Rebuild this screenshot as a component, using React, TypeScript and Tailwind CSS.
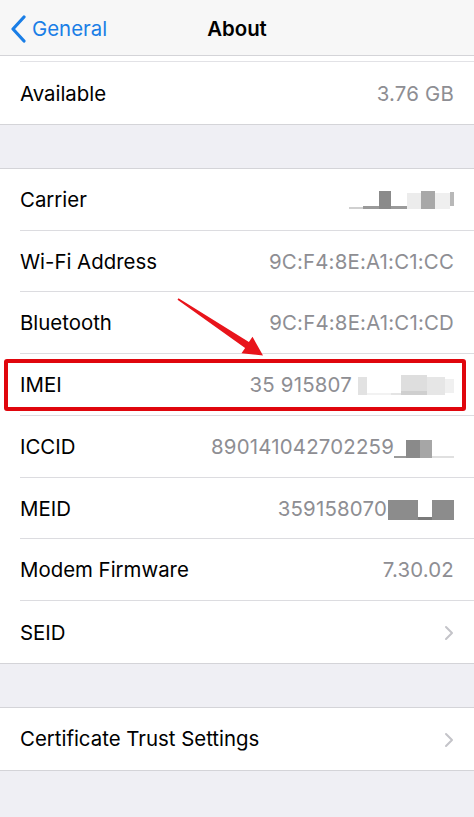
import React from "react";

const font = { fontFamily: "Inter, 'Noto Sans', sans-serif" };

function Chevron() {
  return (
    <svg width="10" height="16" viewBox="0 0 10 16" className="shrink-0">
      <path d="M2 2 L8 8 L2 14" fill="none" stroke="#c4c4c9" strokeWidth="2" strokeLinecap="round" strokeLinejoin="round" />
    </svg>
  );
}

function Row({ label, children, last }: { label: string; children?: React.ReactNode; last?: boolean }) {
  return (
    <div className="relative flex h-[61.75px] items-center bg-white pl-5">
      <div className={`flex h-full flex-1 items-center justify-between pr-5 pt-[2px] ${last ? "" : "border-b border-[#dcdce0]"}`}>
        <span className="text-[20.4px] text-black">{label}</span>
        {children}
      </div>
    </div>
  );
}

function Val({ children }: { children: React.ReactNode }) {
  return <span className="text-[20.4px] tracking-[0.2px] text-[#8e8e93]">{children}</span>;
}

export default function App() {
  return (
    <div className="relative h-[817px] w-[474px] overflow-hidden bg-[#efeff4]" style={font}>
      {/* Nav bar */}
      <div className="relative flex h-[56px] items-center border-b border-[#d4d4d8] bg-[#f7f7f7] pt-[3px]">
        <div className="flex items-center pl-[10px]">
          <svg width="18" height="28" viewBox="0 0 18 28">
            <path d="M14 2 L3 14 L14 26" fill="none" stroke="#1a7ee6" strokeWidth="3.2" strokeLinecap="round" strokeLinejoin="round" />
          </svg>
          <span className="ml-[4px] text-[20.4px] text-[#1a7ee6]">General</span>
        </div>
        <span className="absolute left-1/2 -translate-x-1/2 text-[20.4px] font-semibold text-black">About</span>
      </div>

      {/* Available group */}
      <div className="bg-white">
        <div className="h-[5px]" />
        <div className="ml-5 border-t border-[#e2e2e6]" />
        <div className="border-b border-[#d4d4d8]">
          <Row label="Available" last>
            <Val>3.76 GB</Val>
          </Row>
        </div>
      </div>

      <div className="h-[43px]" />

      {/* Main group */}
      <div className="border-y border-[#d4d4d8]">
        <Row label="Carrier">
          <div className="flex items-end">
            <div className="h-[2px] w-[14px] bg-[#d0d0d0]" />
            <div className="h-[3px] w-[16px] bg-[#9a9a9a]" />
            <div className="h-[18px] w-[12px] bg-[#8a8a8a]" />
            <div className="h-[3px] w-[16px] bg-[#9a9a9a]" />
            <div className="h-[16px] w-[14px] bg-[#ececec]" />
            <div className="h-[18px] w-[14px] bg-[#a8a8a8]" />
            <div className="h-[16px] w-[15px] bg-[#efefef]" />
            <div className="mb-[3px] h-[14px] w-[4px] bg-[#b8b8b8]" />
          </div>
        </Row>
        <Row label="Wi-Fi Address">
          <Val>9C:F4:8E:A1:C1:CC</Val>
        </Row>
        <Row label="Bluetooth">
          <Val>9C:F4:8E:A1:C1:CD</Val>
        </Row>
        <div className="relative">
          <Row label="IMEI">
            <div className="flex items-center">
              <Val>35 915807</Val>
              <div className="ml-[6px] flex items-end">
                <div className="h-[18px] w-[9px] bg-[#e2e2e2]" />
                <div className="h-[2px] w-[24px] bg-[#f2f2f2]" />
                <div className="h-[2px] w-[10px] bg-[#e4e4e4]" />
                <div className="flex h-[20px] w-[26px] flex-col bg-[#dedede]">
                  <div className="flex-1" />
                  <div className="h-[4px] bg-[#cfcfcf]" />
                </div>
                <div className="h-[18px] w-[18px] bg-[#e6e6e6]" />
                <div className="mb-[2px] h-[14px] w-[9px] bg-[#f0f0f0]" />
              </div>
            </div>
          </Row>
          <div className="absolute left-[4px] top-[5px] h-[52px] w-[462px] rounded-[3px] border-[4px] border-[#e0060d]" />
        </div>
        <Row label="ICCID">
          <div className="flex items-end">
            <Val>890141042702259</Val>
            <div className="mb-[4px] flex items-end">
              <div className="h-[2px] w-[12px] bg-[#9a9a9a]" />
              <div className="h-[18px] w-[14px] bg-[#8a8a8a]" />
              <div className="h-[18px] w-[12px] bg-[#a6a6a6]" />
              <div className="h-[2px] w-[22px] bg-[#e0e0e0]" />
            </div>
          </div>
        </Row>
        <Row label="MEID">
          <div className="flex items-end">
            <Val>359158070</Val>
            <div className="mb-[4px] ml-[1px] flex items-end">
              <div className="h-[20px] w-[30px] bg-[#8c8c8c]" />
              <div className="h-[3px] w-[14px] bg-[#7a7a7a]" />
              <div className="h-[20px] w-[22px] bg-[#8c8c8c]" />
            </div>
          </div>
        </Row>
        <Row label="Modem Firmware">
          <Val>7.30.02</Val>
        </Row>
        <Row label="SEID" last>
          <Chevron />
        </Row>
      </div>

      <div className="h-[43px]" />

      <div className="border-y border-[#d4d4d8]">
        <Row label="Certificate Trust Settings" last>
          <Chevron />
        </Row>
      </div>

      {/* Arrow overlay */}
      <svg className="pointer-events-none absolute left-0 top-0" width="474" height="817" viewBox="0 0 474 817">
        <polygon
          points="177.5,299.8 178.5,298.2 248.9,342.1 252.5,336.7 263,355.5 241.5,353.3 245.1,347.9"
          fill="#e8141b"
        />
      </svg>
    </div>
  );
}
